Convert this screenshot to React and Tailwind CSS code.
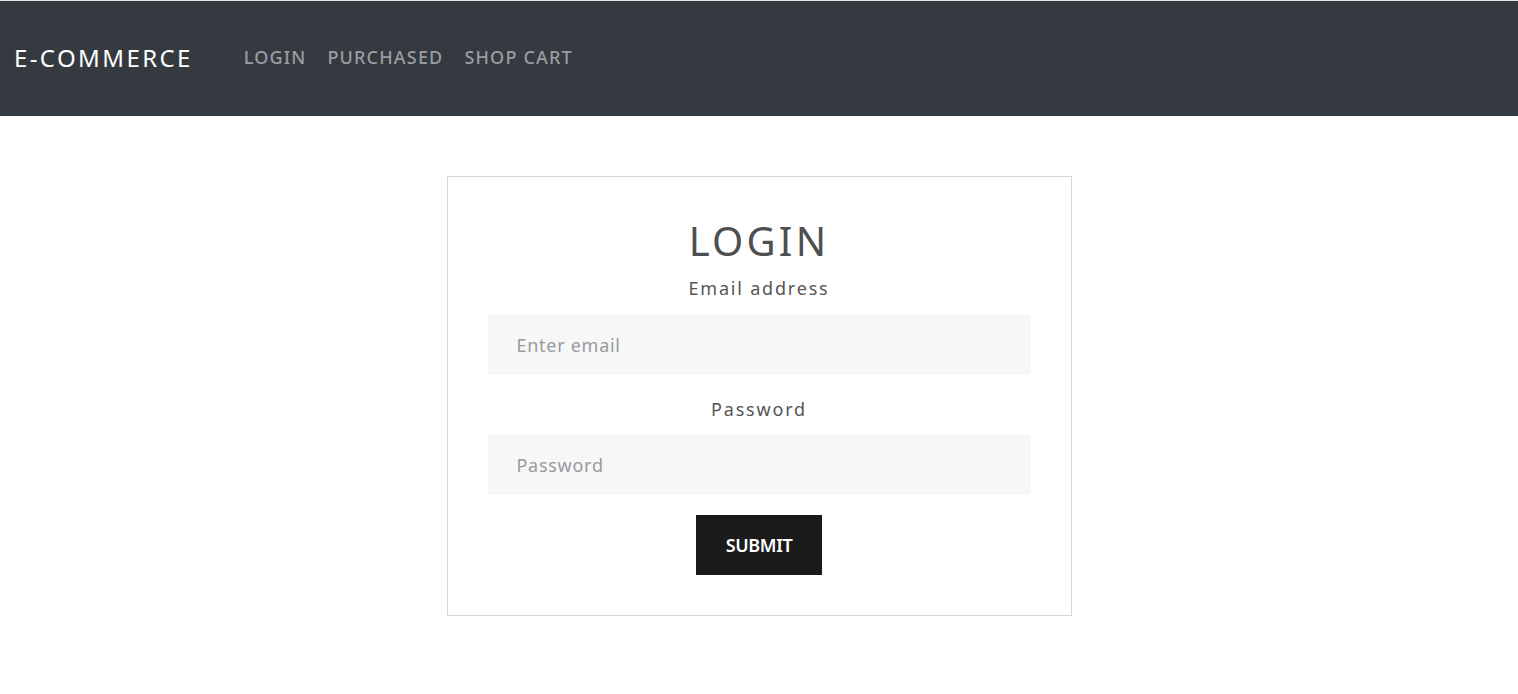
export default function App() {
  return (
    <div className="min-h-screen bg-white" style={{ fontFamily: '"Noto Sans", "Open Sans", sans-serif' }}>
      <nav className="flex h-[116px] items-center border-t border-[#e4e4e4] bg-[#343a40] px-[14px] pb-[2px]">
        <a className="mr-[51px] text-[24px] font-normal tracking-[0.1em] text-white">E-COMMERCE</a>
        <ul className="flex items-center gap-[21px] text-[18px] font-medium tracking-[0.065em] text-[#9a9da1]">
          <li>LOGIN</li>
          <li>PURCHASED</li>
          <li>SHOP CART</li>
        </ul>
      </nav>

      <main className="flex justify-center pt-[60px]">
        <form className="flex w-[625px] flex-col items-center border border-[#d6d6d6] px-[40px] pt-[36px] pb-[40px]">
          <h1 className="text-[40px] leading-[56px] tracking-[0.08em] text-[#4f4f4f]">LOGIN</h1>
          <label className="mt-[6px] text-[18px] leading-[26px] tracking-[0.1em] text-[#555]">Email address</label>
          <input
            type="email"
            placeholder="Enter email"
            className="mt-[14px] h-[60px] w-full bg-[#f6f7f9] px-[29px] text-[18px] tracking-[0.04em] text-[#555] outline-none placeholder:text-[#9a9a9a]"
          />
          <label className="mt-[21px] text-[18px] leading-[26px] tracking-[0.1em] text-[#555]">Password</label>
          <input
            type="password"
            placeholder="Password"
            className="mt-[13px] h-[60px] w-full bg-[#f6f7f9] px-[29px] text-[18px] tracking-[0.04em] text-[#555] outline-none placeholder:text-[#9a9a9a]"
          />
          <button type="button" className="mt-[20px] h-[60px] w-[126px] bg-[#1b1b1b] text-[18px] font-semibold tracking-[-0.02em] text-white">
            SUBMIT
          </button>
        </form>
      </main>
    </div>
  );
}
